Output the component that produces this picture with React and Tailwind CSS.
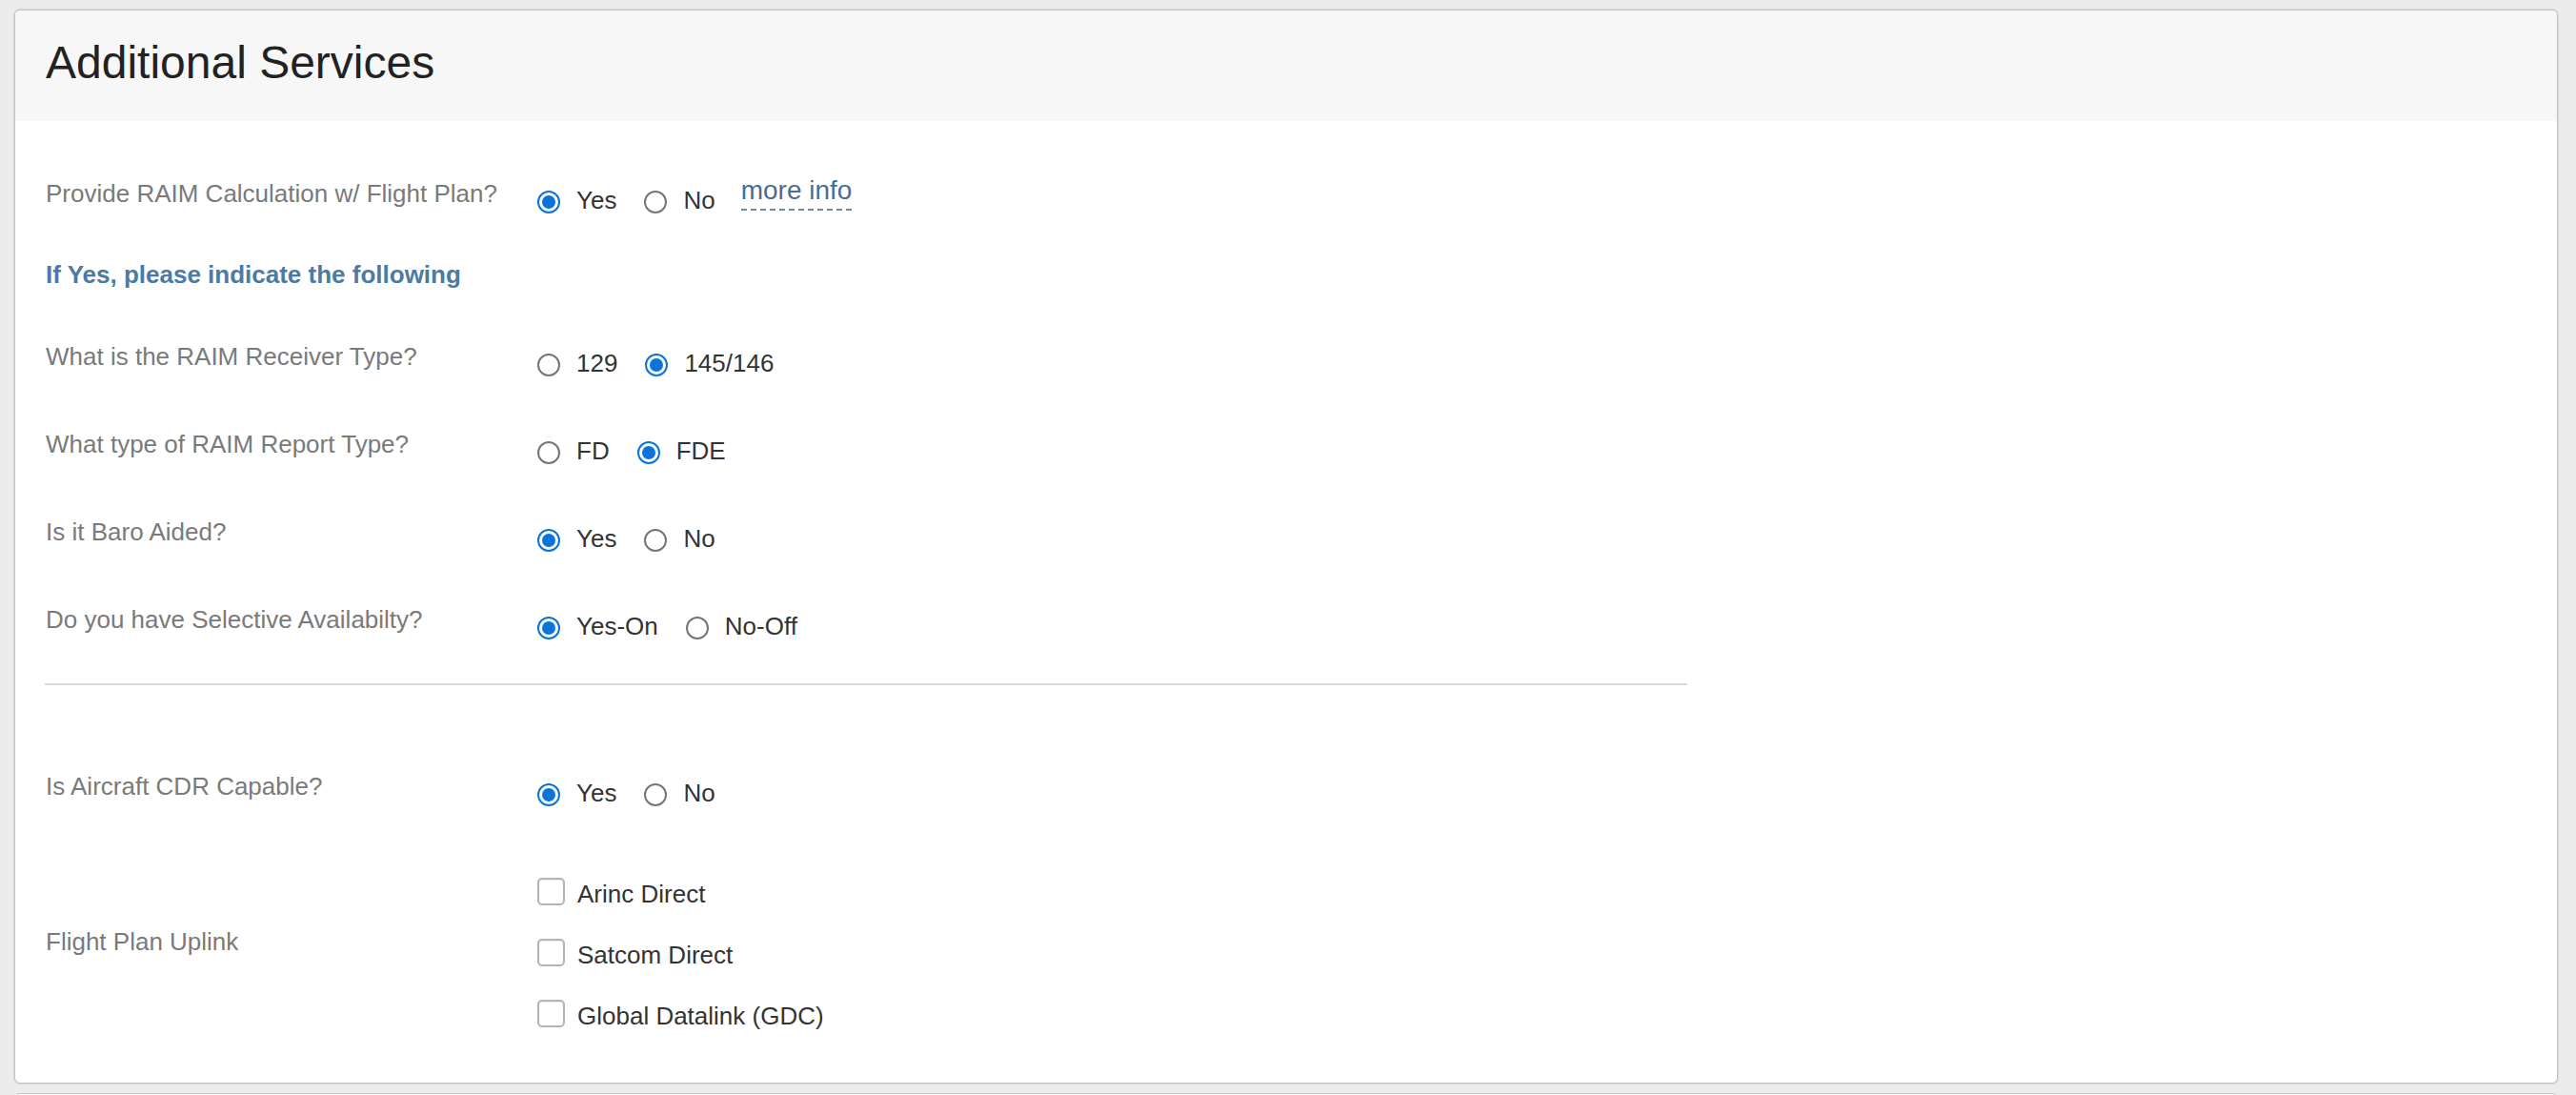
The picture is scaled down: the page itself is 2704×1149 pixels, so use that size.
import React from "react";

function Radio({ checked, label }) {
  return (
    <label className="flex items-center gap-[17px]">
      {checked ? (
        <span className="mt-[4px] w-6 h-6 rounded-full border-2 border-[#0a74da] flex items-center justify-center shrink-0">
          <span className="w-[14px] h-[14px] rounded-full bg-[#0a74da]" />
        </span>
      ) : (
        <span className="mt-[4px] w-6 h-6 rounded-full border-2 border-[#767676] shrink-0" />
      )}
      <span>{label}</span>
    </label>
  );
}

function Checkbox({ label }) {
  return (
    <label className="flex items-center gap-[13px] h-[30px]">
      <span className="-mt-[6px] w-[29px] h-[29px] rounded-[5px] border-2 border-[#b4b4b4] bg-white shadow-[inset_0_1px_2px_rgba(0,0,0,0.1)] shrink-0" />
      <span>{label}</span>
    </label>
  );
}

function RadioRow({ label, options, className = "", children }) {
  return (
    <div className={"flex items-start " + className}>
      <div className="w-[516px] shrink-0 text-[#7a7a7a] leading-[30px]">{label}</div>
      <div className="pt-[7px] flex items-center gap-[29px] text-[#333] leading-[30px]">
        {options.map((o) => (
          <Radio key={o.label} checked={o.checked} label={o.label} />
        ))}
        {children}
      </div>
    </div>
  );
}

export default function App() {
  return (
    <div className="h-[1149px] overflow-hidden bg-[#ececec] pt-[10px] pl-[15px] pr-[19px] font-['Liberation_Sans',Arial,sans-serif] text-[26px]">
      {/* --- CARD --- */}
      <div className="bg-white border border-[#c2c2c2] rounded-[6px] shadow-[0_0_2px_rgba(0,0,0,0.25)] overflow-hidden">
        <div className="bg-[#f7f7f7] pl-[32px] pt-[27px] pb-[33px]">
          <h1 className="text-[48px] leading-[56px] text-[#222]">Additional Services</h1>
        </div>

        <div className="pl-[32px] pt-[61px] pb-[55px]">
          <RadioRow
            label="Provide RAIM Calculation w/ Flight Plan?"
            options={[
              { label: "Yes", checked: true },
              { label: "No", checked: false },
            ]}
          >
            <span className="self-start -mt-[10px] -ml-[2px] text-[28px] leading-[30px] pb-[4px] text-[#4a6d94] border-b-2 border-dashed border-[#7088a4]">
              more info
            </span>
          </RadioRow>

          <div className="mt-[48px] font-bold text-[#4b7ba2] leading-[30px]">
            If Yes, please indicate the following
          </div>

          <RadioRow
            className="mt-[56px]"
            label="What is the RAIM Receiver Type?"
            options={[
              { label: "129", checked: false },
              { label: "145/146", checked: true },
            ]}
          />
          <RadioRow
            className="mt-[55px]"
            label="What type of RAIM Report Type?"
            options={[
              { label: "FD", checked: false },
              { label: "FDE", checked: true },
            ]}
          />
          <RadioRow
            className="mt-[55px]"
            label="Is it Baro Aided?"
            options={[
              { label: "Yes", checked: true },
              { label: "No", checked: false },
            ]}
          />
          <RadioRow
            className="mt-[55px]"
            label="Do you have Selective Availabilty?"
            options={[
              { label: "Yes-On", checked: true },
              { label: "No-Off", checked: false },
            ]}
          />

          <div className="mt-[45px] -ml-[1px] w-[1724px] h-[2px] bg-[#d9d9d9]" />

          <RadioRow
            className="mt-[91px]"
            label="Is Aircraft CDR Capable?"
            options={[
              { label: "Yes", checked: true },
              { label: "No", checked: false },
            ]}
          />

          <div className="mt-[76px] flex items-start">
            <div className="w-[516px] shrink-0 mt-[50px] text-[#7a7a7a] leading-[30px]">
              Flight Plan Uplink
            </div>
            <div className="flex flex-col gap-[34px] text-[#333] leading-[30px]">
              <Checkbox label="Arinc Direct" />
              <Checkbox label="Satcom Direct" />
              <Checkbox label="Global Datalink (GDC)" />
            </div>
          </div>
        </div>
      </div>

      {/* next card peeking in */}
      <div className="mt-[10px] h-[40px] bg-white border border-[#c2c2c2] rounded-[6px]" />
    </div>
  );
}
